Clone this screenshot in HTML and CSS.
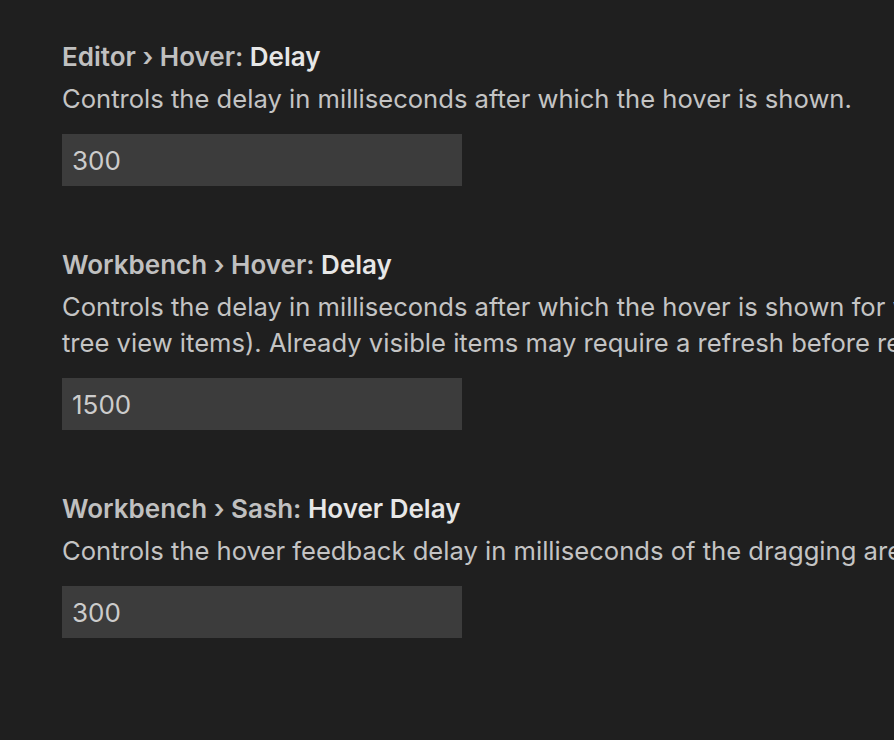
FILE: index.html
```html
<!DOCTYPE html>
<html lang="en">
<head>
    <meta charset="UTF-8">
    <meta name="viewport" content="width=device-width, initial-scale=1.0">
    <title>Settings</title>
    <link rel="stylesheet" href="styles.css">
</head>
<body>

<!-- Danh sách cài đặt -->
<div class="settings-list">

    <div class="setting-item">
        <div class="setting-title">
            <span class="setting-category">Editor › Hover: </span><span class="setting-label">Delay</span>
        </div>
        <div class="setting-description">Controls the delay in milliseconds after which the hover is shown.</div>
        <input class="setting-input" type="text" value="300">
    </div>

    <div class="setting-item">
        <div class="setting-title">
            <span class="setting-category">Workbench › Hover: </span><span class="setting-label">Delay</span>
        </div>
        <div class="setting-description">Controls the delay in milliseconds after which the hover is shown for workbench items (ex. some extension provided<br>tree view items). Already visible items may require a refresh before reflecting this setting change.</div>
        <input class="setting-input" type="text" value="1500">
    </div>

    <div class="setting-item">
        <div class="setting-title">
            <span class="setting-category">Workbench › Sash: </span><span class="setting-label">Hover Delay</span>
        </div>
        <div class="setting-description">Controls the hover feedback delay in milliseconds of the dragging area in between views/editors.</div>
        <input class="setting-input" type="text" value="300">
    </div>

</div>

</body>
</html>
```

FILE: styles.css
```css
/* Nền tối cho trang cài đặt */
html, body {
    margin: 0;
    height: 100%;
    overflow: hidden;
    background-color: #1f1f1f;
}

body {
    font-family: Inter, "Noto Sans", sans-serif;
    font-size: 26px;
    line-height: 36px;
    color: #cccccc;
}

.settings-list {
    padding: 39px 0 0 62px;
}

/* Mỗi mục cài đặt */
.setting-item {
    display: flex;
    flex-direction: column;
    align-items: flex-start;
    margin-bottom: 61px;
}

.setting-title {
    font-weight: 600;
    white-space: nowrap;
}

.setting-category {
    color: #c0c0c0;
}

.setting-label {
    color: #e7e7e7;
}

/* Mô tả dài bị cắt ở mép phải */
.setting-description {
    margin-top: 6px;
    font-size: 25.6px;
    white-space: nowrap;
    color: #c4c4c4;
}

/* Ô nhập số */
.setting-input {
    margin-top: 17px;
    box-sizing: border-box;
    width: 400px;
    height: 52px;
    padding: 0 10px;
    border: none;
    outline: none;
    background-color: #3c3c3c;
    color: #cccccc;
    font-family: inherit;
    font-size: 26px;
}
```
